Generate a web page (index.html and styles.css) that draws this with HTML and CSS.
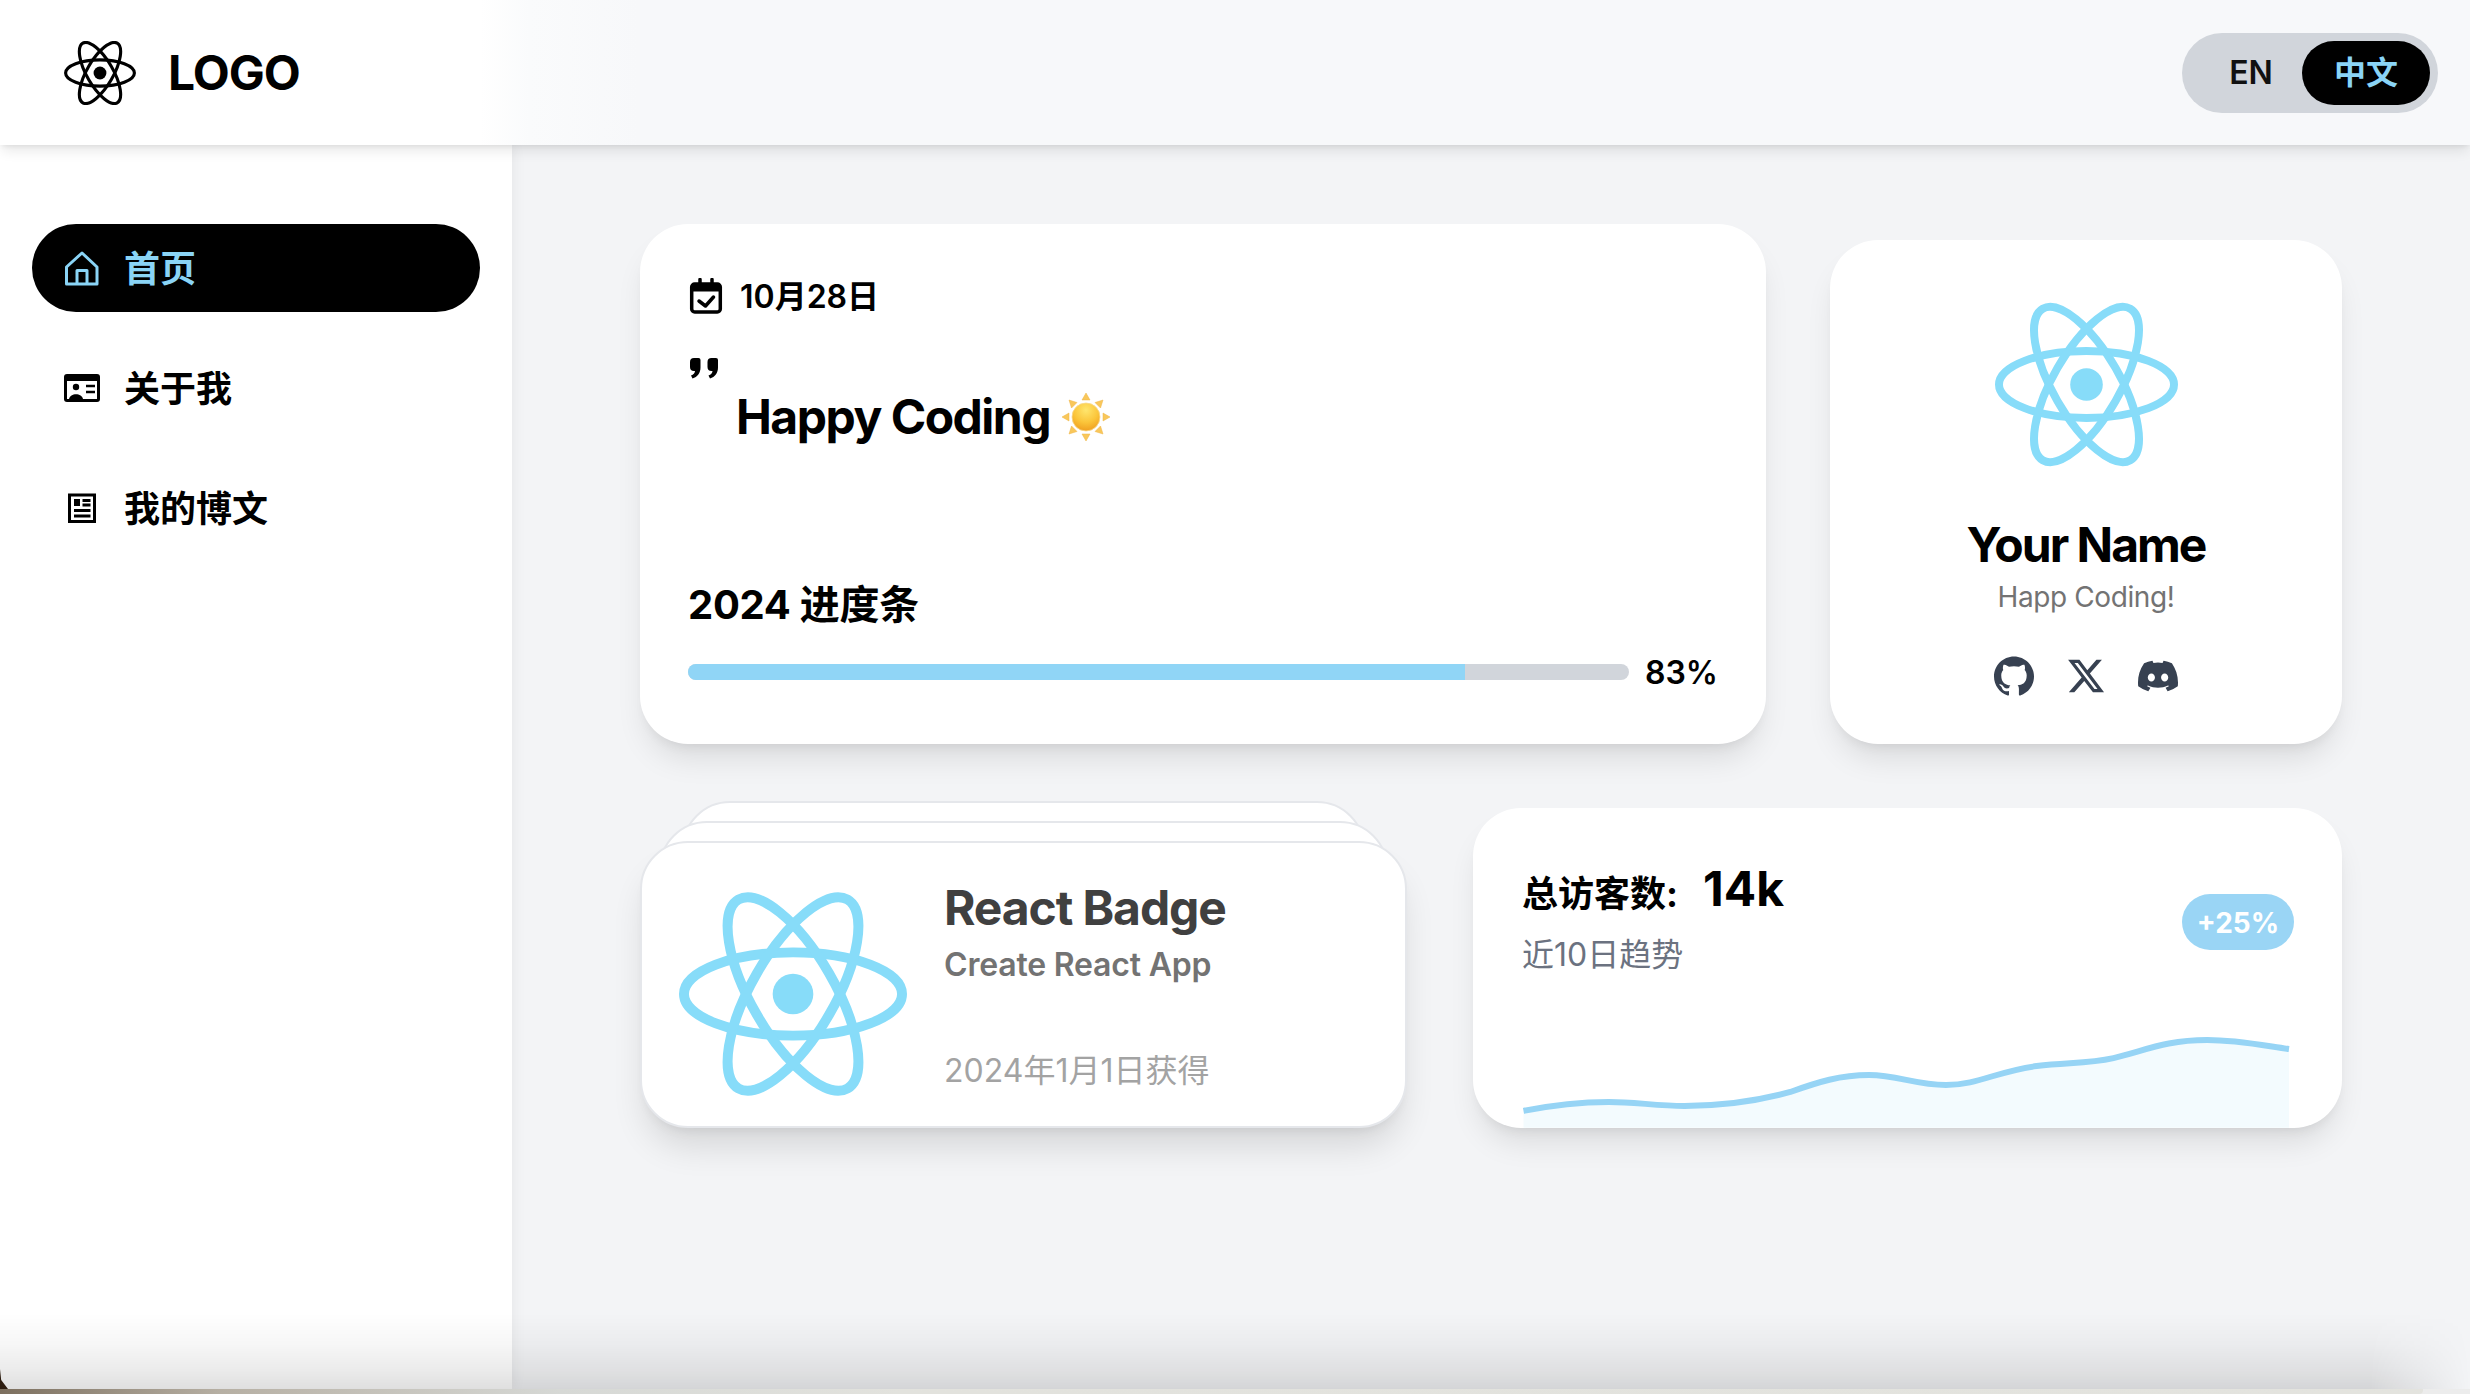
FILE: index.html
```html
<!DOCTYPE html>
<html lang="zh-CN">
<head>
<meta charset="utf-8">
<title>Dashboard</title>
<link rel="stylesheet" href="styles.css">
</head>
<body>
<svg class="defs" width="0" height="0" aria-hidden="true">
  <defs>
    <symbol id="atom" viewBox="-11.5 -10.23 23 20.46">
      <circle cx="0" cy="0" r="2.05" fill="currentColor"/>
      <g stroke="currentColor" stroke-width="1" fill="none">
        <ellipse rx="11" ry="4.2"/>
        <ellipse rx="11" ry="4.2" transform="rotate(60)"/>
        <ellipse rx="11" ry="4.2" transform="rotate(120)"/>
      </g>
    </symbol>
    <radialGradient id="sunfill" cx="50%" cy="25%" r="80%">
      <stop offset="0" stop-color="#ffe66e"/>
      <stop offset=".55" stop-color="#fbc53a"/>
      <stop offset="1" stop-color="#ee9a1c"/>
    </radialGradient>
  </defs>
</svg>
<div class="window">
  <header class="topbar">
    <div class="brand">
      <svg class="brand-mark"><use href="#atom"/></svg>
      <span class="brand-name">LOGO</span>
    </div>
    <div class="lang">
      <span class="lang-opt">EN</span>
      <span class="lang-opt lang-active">中文</span>
    </div>
  </header>
  <div class="layout">
    <aside class="sidebar">
      <nav class="nav">
        <a class="nav-item nav-active">
          <svg class="nav-icon" viewBox="0 0 36 36" fill="none" stroke="currentColor" stroke-width="3" stroke-linejoin="round"><path d="M2.5 17 18 3l15 14v17H2.500z"/><path d="M13 34V20.500h10V34"/></svg>
          <span class="nav-label">首页</span>
        </a>
        <a class="nav-item">
          <svg class="nav-icon" viewBox="0 0 36 36"><rect x="0" y="4" width="36" height="28" rx="3" fill="currentColor"/><rect x="3" y="11" width="30" height="18" fill="#fff"/><circle cx="12" cy="17" r="3.200" fill="currentColor"/><path d="M5 29c1-6.500 13-6.500 14 0z" fill="currentColor"/><path d="M22 16h9M22 22h9" stroke="currentColor" stroke-width="2.600"/></svg>
          <span class="nav-label">关于我</span>
        </a>
        <a class="nav-item">
          <svg class="nav-icon" viewBox="0 0 36 36" fill="none" stroke="currentColor" stroke-width="3"><rect x="5.500" y="5" width="25" height="26.500"/><rect x="10" y="9" width="6" height="7" fill="currentColor" stroke="none"/><path d="M18.500 10.500h8M18.500 15h8M10 20.500h16.500M10 26h16.500"/></svg>
          <span class="nav-label">我的博文</span>
        </a>
      </nav>
    </aside>
    <main class="content">
      <section class="row row-top">
        <article class="card card-today">
          <div class="today-date">
            <svg class="icon-36" viewBox="0 0 36 36" fill="none" stroke="currentColor" stroke-width="3.500" stroke-linejoin="round" stroke-linecap="round"><rect x="3.700" y="6" width="28.600" height="28" rx="3"/><path d="M3.700 10h28.600" stroke-width="7" stroke-linecap="butt"/><path d="M12 1.500v5M24 1.500v5" stroke-width="3.500"/><path d="M11 23l6.500 5L25.500 19"/></svg>
            <span class="today-text">10月28日</span>
          </div>
          <svg class="quote" viewBox="0 0 32 32"><path fill="currentColor" d="M6 6h4.500a2 2 0 0 1 2 2v7.500c0 5.500-3 9.500-8 11L3 23.500c2.500-.8 3.800-2.300 4-4.500H6a4 4 0 0 1-4-4v-5a4 4 0 0 1 4-4z"/><path fill="currentColor" d="M23.500 6H28a2 2 0 0 1 2 2v7.500c0 5.500-3 9.500-8 11l-1.500-3c2.500-.8 3.800-2.300 4-4.500h-1a4 4 0 0 1-4-4v-5a4 4 0 0 1 4-4z"/></svg>
          <p class="motto">Happy Coding
            <svg class="sun" viewBox="0 0 48 48"><g fill="#f9c75a" stroke="#eeb547" stroke-width=".5"><path d="M24 0l4 7h-8z"/><path d="M24 48l4-7h-8z"/><path d="M0 24l7-4v8z"/><path d="M48 24l-7-4v8z"/><path d="M7 7l8 2.500L9.500 15z"/><path d="M41 7l-8 2.500 5.500 5.500z"/><path d="M7 41l8-2.500L9.500 33z"/><path d="M41 41l-8-2.500 5.500-5.500z"/></g><circle cx="24" cy="24" r="14" fill="url(#sunfill)" stroke="#f7d98d" stroke-width=".8"/></svg>
          </p>
          <div class="year">
            <h2 class="year-title">2024 进度条</h2>
            <div class="year-row">
              <div class="bar"><div class="bar-fill" style="width:82.6%"></div></div>
              <span class="year-pct">83%</span>
            </div>
          </div>
        </article>
        <article class="card card-profile">
          <svg class="profile-logo"><use href="#atom"/></svg>
          <h2 class="profile-name">Your Name</h2>
          <p class="profile-tag">Happ Coding!</p>
          <div class="socials">
            <svg class="social" viewBox="0 0 24 24"><path d="M12 .297c-6.630 0-12 5.373-12 12 0 5.303 3.438 9.800 8.205 11.385.6.113.82-.258.82-.577 0-.285-.01-1.040-.015-2.040-3.338.724-4.042-1.610-4.042-1.610C4.422 18.070 3.633 17.700 3.633 17.700c-1.087-.744.084-.729.084-.729 1.205.084 1.838 1.236 1.838 1.236 1.070 1.835 2.809 1.305 3.495.998.108-.776.417-1.305.76-1.605-2.665-.3-5.466-1.332-5.466-5.930 0-1.310.465-2.380 1.235-3.220-.135-.303-.54-1.523.105-3.176 0 0 1.005-.322 3.300 1.230.96-.267 1.980-.399 3-.405 1.020.006 2.040.138 3 .405 2.280-1.552 3.285-1.230 3.285-1.230.645 1.653.24 2.873.12 3.176.765.84 1.230 1.910 1.230 3.220 0 4.610-2.805 5.625-5.475 5.920.42.36.81 1.096.81 2.220 0 1.606-.015 2.896-.015 3.286 0 .315.21.69.825.57C20.565 22.092 24 17.592 24 12.297c0-6.627-5.373-12-12-12"/></svg>
            <svg class="social" viewBox="0 0 24 24"><path d="M18.244 2.250h3.308l-7.227 8.260 8.502 11.240H16.170l-5.214-6.817L4.990 21.750H1.680l7.730-8.835L1.254 2.250H8.080l4.713 6.231zm-1.161 17.520h1.833L7.084 4.126H5.117z"/></svg>
            <svg class="social" viewBox="0 0 24 24"><path d="M20.317 4.370a19.791 19.791 0 0 0-4.885-1.515.074.074 0 0 0-.079.037c-.21.375-.444.864-.608 1.250a18.270 18.270 0 0 0-5.487 0 12.640 12.640 0 0 0-.617-1.250.077.077 0 0 0-.079-.037A19.736 19.736 0 0 0 3.677 4.370a.07.07 0 0 0-.032.027C.533 9.046-.32 13.580.099 18.057a.082.082 0 0 0 .031.057 19.900 19.900 0 0 0 5.993 3.030.078.078 0 0 0 .084-.028 14.090 14.090 0 0 0 1.226-1.994.076.076 0 0 0-.041-.106 13.107 13.107 0 0 1-1.872-.892.077.077 0 0 1-.008-.128 10.200 10.200 0 0 0 .372-.292.074.074 0 0 1 .077-.01c3.928 1.793 8.180 1.793 12.062 0a.074.074 0 0 1 .078.01c.12.098.246.198.373.292a.077.077 0 0 1-.006.127 12.299 12.299 0 0 1-1.873.892.077.077 0 0 0-.041.107c.36.698.772 1.362 1.225 1.993a.076.076 0 0 0 .084.028 19.839 19.839 0 0 0 6.002-3.030.077.077 0 0 0 .032-.054c.5-5.177-.838-9.674-3.549-13.660a.061.061 0 0 0-.031-.03zM8.020 15.330c-1.183 0-2.157-1.085-2.157-2.419 0-1.333.956-2.419 2.157-2.419 1.210 0 2.176 1.096 2.157 2.420 0 1.333-.956 2.418-2.157 2.418zm7.975 0c-1.183 0-2.157-1.085-2.157-2.419 0-1.333.955-2.419 2.157-2.419 1.210 0 2.176 1.096 2.157 2.420 0 1.333-.946 2.418-2.157 2.418z"/></svg>
          </div>
        </article>
      </section>
      <section class="row row-bottom">
        <div class="badge-stack">
          <div class="badge-layer badge-back"></div>
          <div class="badge-layer badge-mid"></div>
          <article class="badge-front">
            <svg class="badge-logo"><use href="#atom"/></svg>
            <div class="badge-info">
              <h3 class="badge-title">React Badge</h3>
              <p class="badge-sub">Create React App</p>
              <p class="badge-date">2024年1月1日获得</p>
            </div>
          </article>
        </div>
        <article class="card card-stats">
          <div class="stats-head">
            <div>
              <div class="stats-line"><span class="stats-label">总访客数:</span><span class="stats-value">14k</span></div>
              <p class="stats-sub">近10日趋势</p>
            </div>
            <span class="stats-pill">+25%</span>
          </div>
          <svg class="chart" viewBox="0 0 770 98">
            <path class="chart-area" d="M.5 81C30 75 58 72 86 72c26 0 48 4 76 4 34 0 70-4 106-14 28-10 50-17 79-17 28 0 47 10 77 10 32 0 52-14 91-19 30-4 50-2 77-8 33-8 53-18 94-18 29 0 54 5 82 9v79H.5z"/>
            <path class="chart-line" d="M.5 81C30 75 58 72 86 72c26 0 48 4 76 4 34 0 70-4 106-14 28-10 50-17 79-17 28 0 47 10 77 10 32 0 52-14 91-19 30-4 50-2 77-8 33-8 53-18 94-18 29 0 54 5 82 9"/>
          </svg>
        </article>
      </section>
    </main>
  </div>
  <div class="window-shade"></div>
</div>
<div class="desktop-strip"></div>
</body>
</html>
```
FILE: styles.css
```css
* { box-sizing: border-box; }
html, body { margin: 0; padding: 0; }
body {
  width: 2470px;
  height: 1394px;
  overflow: hidden;
  background: #ececec;
  color: #000;
  font-family: Inter, "Noto Sans CJK SC", sans-serif;
}
h2, h3, p { margin: 0; }
.defs { position: absolute; }

.window {
  position: relative;
  height: 1389px;
  display: flex;
  flex-direction: column;
  overflow: hidden;
  background: #f3f4f6;
}
.window::before {
  content: "";
  position: absolute;
  left: 0;
  bottom: 0;
  width: 8px;
  height: 20px;
  background: #2c1c0f;
  clip-path: polygon(0 0, 15% 55%, 100% 100%, 0 100%);
  z-index: 5;
}
.window-shade {
  position: absolute;
  left: 0;
  right: 0;
  bottom: 0;
  height: 76px;
  pointer-events: none;
  z-index: 4;
  background: linear-gradient(to bottom, rgba(0,0,0,0) 0, rgba(0,0,0,.03) 40%, rgba(0,0,0,.08) 75%, rgba(0,0,0,.125) 100%);
  -webkit-mask-image: linear-gradient(to left, transparent 0, #000 100px);
  mask-image: linear-gradient(to left, transparent 0, #000 100px);
}
.desktop-strip {
  width: 2423px;
  height: 5px;
  border-bottom-right-radius: 4px;
  background: linear-gradient(to right, #7c6f5e 0, #b6afa3 220px, #d6d8d5 560px, #e2e2dd 900px, #e3e3de 100%);
}

.topbar {
  position: relative;
  z-index: 3;
  flex: 0 0 145px;
  display: flex;
  align-items: center;
  justify-content: space-between;
  padding: 0 32px 0 64px;
  background: linear-gradient(to right, #fff 480px, #fafbfc 530px, #f7f8fa 640px);
  box-shadow: 0 8px 12px -2px rgba(0,0,0,.09), 0 3px 5px -2px rgba(0,0,0,.08);
}
.brand { display: flex; align-items: center; gap: 32px; }
.brand-mark { width: 72px; height: 64px; color: #000; }
.brand-name { font-size: 48px; font-weight: 700; line-height: 56px; letter-spacing: -1px; }

.lang {
  display: flex;
  align-items: center;
  width: 256px;
  height: 80px;
  padding: 8px;
  border-radius: 40px;
  background: #d1d5db;
}
.lang-opt {
  flex: 0 0 112px;
  padding-left: 10px;
  text-align: center;
  font-size: 32px;
  font-weight: 600;
  line-height: 64px;
  color: #111;
}
.lang-active {
  flex: 0 0 128px;
  height: 64px;
  padding-left: 0;
  border-radius: 32px;
  background: #000;
  color: #8ad4f6;
}

.layout { flex: 1; display: flex; min-height: 0; }
.sidebar {
  position: relative;
  z-index: 2;
  flex: 0 0 512px;
  padding: 79px 32px 0;
  background: #fff;
  box-shadow: 0 0 14px rgba(0,0,0,.07);
}
.nav { display: flex; flex-direction: column; gap: 32px; }
.nav-item {
  display: flex;
  align-items: center;
  gap: 24px;
  height: 88px;
  padding-left: 32px;
  border-radius: 44px;
  font-size: 36px;
  font-weight: 600;
}
.nav-label { margin-bottom: 5px; }
.nav-active { background: #000; color: #8ad4f6; }
.nav-icon { flex: none; width: 36px; height: 36px; }

.content { flex: 1; padding: 79px 128px 0; min-width: 0; }
.row { display: flex; align-items: flex-end; }
.row-top { gap: 64px; }
.row-bottom { margin-top: 57px; justify-content: space-between; }

.card {
  background: #fff;
  border-radius: 48px;
  box-shadow: 0 20px 30px -6px rgba(0,0,0,.1), 0 8px 12px -6px rgba(0,0,0,.08);
}
.card-today {
  flex: 1;
  height: 520px;
  display: flex;
  flex-direction: column;
  padding: 54px 48px 52px;
}
.today-date {
  display: flex;
  align-items: center;
  gap: 16px;
  height: 36px;
  font-size: 32px;
  font-weight: 600;
  line-height: 36px;
}
.today-text { padding-top: 2px; }
.icon-36 { flex: none; width: 36px; height: 36px; }
.quote { display: block; width: 32px; height: 32px; margin-top: 38px; }
.motto {
  display: flex;
  align-items: center;
  gap: 12px;
  height: 56px;
  margin-top: 5px;
  padding-left: 48px;
  font-size: 48px;
  font-weight: 700;
  line-height: 56px;
  letter-spacing: -1.5px;
}
.sun { flex: none; width: 48px; height: 48px; }
.year { margin-top: auto; }
.year-title { font-size: 40px; font-weight: 700; line-height: 48px; letter-spacing: -.3px; }
.year-row { display: flex; align-items: center; gap: 16px; height: 40px; margin-top: 23px; }
.bar { flex: 1; height: 16px; border-radius: 8px; background: #d1d5db; overflow: hidden; }
.bar-fill { height: 100%; background: #90d5f6; }
.year-pct { padding-top: 2px; font-size: 32px; font-weight: 600; line-height: 40px; }

.card-profile {
  flex: 0 0 512px;
  height: 504px;
  display: flex;
  flex-direction: column;
  align-items: center;
  padding-top: 62px;
}
.profile-logo { width: 183px; height: 165px; color: #87dcf9; }
.profile-name { margin-top: 50px; font-size: 48px; font-weight: 700; line-height: 56px; letter-spacing: -2px; }
.profile-tag { margin-top: 6px; font-size: 28px; line-height: 36px; letter-spacing: -.4px; color: #737373; }
.socials { display: flex; gap: 32px; margin-top: 41px; }
.social { width: 40px; height: 40px; fill: #374151; }

.badge-stack { position: relative; width: 767px; height: 327px; padding-top: 40px; }
.badge-layer {
  position: absolute;
  height: 120px;
  background: #fff;
  border: 2px solid #e5e7eb;
  border-radius: 48px;
}
.badge-back { top: 0; left: 42px; right: 42px; }
.badge-mid { top: 20px; left: 19px; right: 19px; }
.badge-front {
  position: relative;
  display: flex;
  align-items: flex-start;
  gap: 37px;
  height: 287px;
  padding: 48px 0 0 37px;
  background: #fff;
  border: 2px solid #e5e7eb;
  border-radius: 48px;
  box-shadow: 0 24px 34px -6px rgba(0,0,0,.12), 0 8px 12px -6px rgba(0,0,0,.08);
}
.badge-logo { flex: none; width: 228px; height: 206px; color: #87dcf9; }
.badge-info { margin-top: -11px; }
.badge-title { font-size: 48px; font-weight: 700; line-height: 56px; letter-spacing: -1.1px; color: #404040; }
.badge-sub { margin-top: 9px; font-size: 32px; font-weight: 600; line-height: 40px; letter-spacing: -.2px; color: #737373; }
.badge-date { margin-top: 66px; font-size: 32px; line-height: 40px; color: #a3a3a3; }

.card-stats {
  flex: 0 0 869px;
  height: 320px;
  padding: 53px 48px 0 49px;
  overflow: hidden;
}
.stats-head { display: flex; align-items: flex-start; justify-content: space-between; }
.stats-line { display: flex; align-items: flex-start; gap: 25px; height: 56px; }
.stats-label { margin-top: 5px; font-size: 36px; font-weight: 700; line-height: 56px; }
.stats-value { font-size: 48px; font-weight: 700; line-height: 56px; }
.stats-sub { margin-top: 18px; font-size: 32px; line-height: 40px; color: #6b7280; }
.stats-pill {
  margin-top: 33px;
  width: 112px;
  height: 56px;
  padding-top: 2px;
  border-radius: 28px;
  background: #9ad5f5;
  color: #fff;
  font-size: 28px;
  font-weight: 700;
  line-height: 54px;
  text-align: center;
}
.chart { display: block; width: 768px; height: 98px; margin: 55px 0 0 1px; overflow: visible; }
.chart-area { fill: #f3fbfe; }
.chart-line { fill: none; stroke: #96d4f5; stroke-width: 6; }
```
